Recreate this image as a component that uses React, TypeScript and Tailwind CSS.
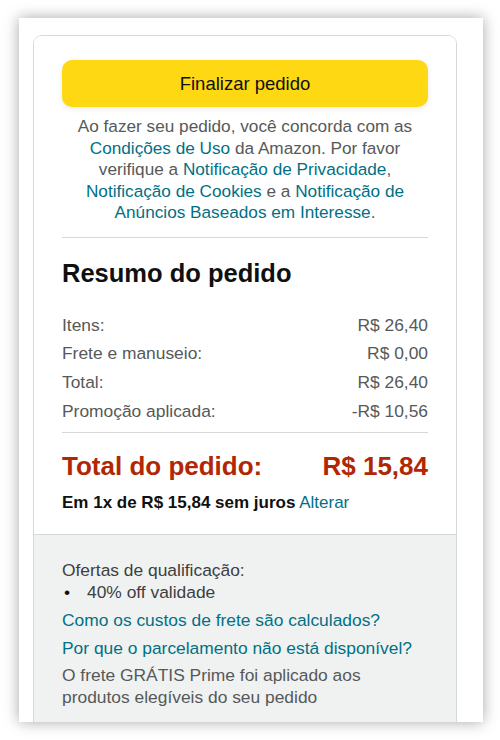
import type { ReactNode } from "react";

const LINK = "text-[#007185]";

function Row({ label, value }: { label: string; value: string }) {
  return (
    <div className="flex items-center justify-between h-[28.7px] text-[17.4px] text-[#565959]">
      <span>{label}</span>
      <span>{value}</span>
    </div>
  );
}

function Line({ children, className = "" }: { children: ReactNode; className?: string }) {
  return <div className={`leading-[21.5px] ${className}`}>{children}</div>;
}

export default function App() {
  return (
    <div
      className="w-[500px] h-[740px] bg-white overflow-hidden pt-[18px]"
      style={{ fontFamily: '"Liberation Sans", Arial, sans-serif' }}
    >
      <div className="ml-[19px] w-[464px] h-[704px] bg-white overflow-hidden shadow-[0_0_14px_rgba(0,0,0,0.35)] pt-[17px]">
        <div className="ml-[14px] w-[424px] border border-[#d5d9d9] rounded-[9px] overflow-hidden">
          <div className="px-[28px] pt-[24px] pb-[20px] bg-white">
            <button className="w-full h-[47px] rounded-[10px] bg-[#FFD814] text-[#0F1111] text-[18.5px] shadow-[0_2px_5px_rgba(213,217,217,0.5)]">
              Finalizar pedido
            </button>

            <p className="mt-[9px] text-center text-[17.2px] leading-[21.5px] text-[#565959]">
              Ao fazer seu pedido, você concorda com as
              <br />
              <span className={LINK}>Condições de Uso</span> da Amazon. Por favor
              <br />
              verifique a <span className={LINK}>Notificação de Privacidade</span>,
              <br />
              <span className={LINK}>Notificação de Cookies</span> e a{" "}
              <span className={LINK}>Notificação de</span>
              <br />
              <span className={LINK}>Anúncios Baseados em Interesse</span>.
            </p>

            <div className="mt-[13px] border-t border-[#d5d9d9]" />

            <h2 className="mt-[19px] text-[25.5px] leading-[32px] font-bold text-[#0F1111]">
              Resumo do pedido
            </h2>

            <div className="mt-[22px]">
              <Row label="Itens:" value="R$ 26,40" />
              <Row label="Frete e manuseio:" value="R$ 0,00" />
              <Row label="Total:" value="R$ 26,40" />
              <Row label="Promoção aplicada:" value="-R$ 10,56" />
            </div>

            <div className="mt-[7px] border-t border-[#d5d9d9]" />

            <div className="mt-[17px] flex items-center justify-between text-[26px] leading-[32px] font-bold text-[#B12704]">
              <span>Total do pedido:</span>
              <span>R$ 15,84</span>
            </div>

            <div className="mt-[10px] text-[17px] leading-[22px] text-[#0F1111]">
              <span className="font-bold">Em 1x de R$ 15,84 sem juros</span>{" "}
              <span className={LINK}>Alterar</span>
            </div>
          </div>

          <div className="border-t border-[#d5d9d9] bg-[#f0f2f2] px-[28px] pt-[25px] pb-[40px] text-[17.4px] text-[#565959]">
            <Line className="text-[#3d4040]">Ofertas de qualificação:</Line>
            <Line className="flex text-[#3d4040]">
              <span className="w-[25px] pl-[2px] text-[#0F1111]">•</span>
              <span>40% off validade</span>
            </Line>
            <Line className={`mt-[7px] ${LINK}`}>Como os custos de frete são calculados?</Line>
            <Line className={`mt-[6px] ${LINK}`}>Por que o parcelamento não está disponível?</Line>
            <Line className="mt-[6px]">O frete GRÁTIS Prime foi aplicado aos</Line>
            <Line>produtos elegíveis do seu pedido</Line>
          </div>
        </div>
      </div>
    </div>
  );
}
